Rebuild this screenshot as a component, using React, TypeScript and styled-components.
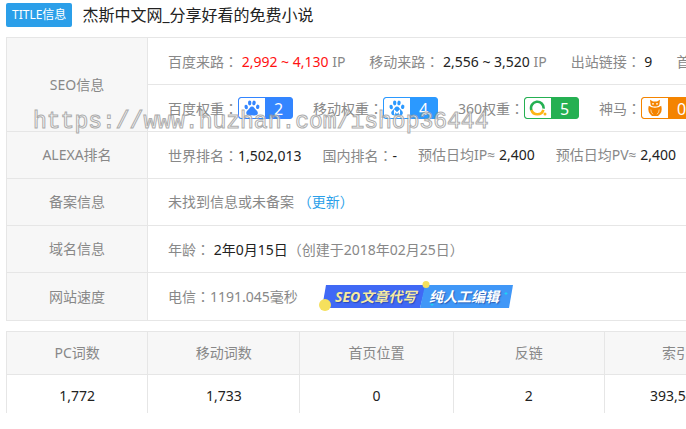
import React from "react";
import styled, { createGlobalStyle } from "styled-components";

const Global = createGlobalStyle`
  * { box-sizing: border-box; }
  body {
    margin: 0;
    background: #fff;
    color: #888;
    font: 14px/20px "Noto Sans", "Open Sans", "Noto Sans CJK SC", sans-serif;
    overflow: hidden;
  }
`;

const Page = styled.main`
  position: relative;
  padding: 3px 0 0 6px;
  overflow: hidden;
`;

const TitleBar = styled.header`
  display: flex;
  align-items: center;
  gap: 10px;
  height: 24px;
  margin-bottom: 10px;
  white-space: nowrap;
`;

const Tag = styled.span`
  padding: 0 6px;
  border-radius: 2px;
  background: #2b9fe9;
  color: #fff;
  font-size: 12px;
  line-height: 24px;
`;

const Title = styled.h1`
  margin: 0;
  color: #222;
  font-size: 16px;
  font-weight: 400;
  line-height: 24px;
`;

const Table = styled.table`
  min-width: 100%;
  border-collapse: collapse;
  white-space: nowrap;
`;

const InfoTable = styled(Table)`
  margin-bottom: 10px;
`;

const InfoHead = styled.th`
  width: 141px;
  min-width: 141px;
  padding: 0;
  border: 1px solid #e6e6e6;
  background: #f7f7f7;
  font-weight: 400;
  text-align: center;
`;

const InfoCell = styled.td<{ $tall?: boolean }>`
  height: ${(p) => (p.$tall ? 48 : 47)}px;
  padding: 0 20px;
  border: 1px solid #e6e6e6;
`;

const Items = styled.div<{ $gap?: number }>`
  display: flex;
  align-items: center;
  gap: ${(p) => p.$gap ?? 20}px;
`;

const Item = styled.span`
  white-space: pre;
`;

const WeightItem = styled.span`
  display: flex;
  align-items: center;
`;

const Colon = styled.span`
  font-family: "Noto Sans CJK TC", sans-serif;
`;

const Value = styled.span<{ $hot?: boolean }>`
  color: ${(p) => (p.$hot ? "#f11" : "#222")};
`;

const Link = styled.a`
  color: #2b9fe9;
  text-decoration: none;
`;

const Badge = styled.a<{ $color: string }>`
  display: flex;
  width: 55px;
  height: 22px;
  border: 1px solid ${(p) => p.$color};
  border-radius: 3px;
  background: ${(p) => p.$color};
  color: #fff;
  font-size: 16px;
  line-height: 22px;
  text-decoration: none;
  overflow: hidden;
`;

const BadgeIcon = styled.span`
  display: flex;
  align-items: center;
  justify-content: center;
  width: 26px;
  border-radius: 2px 0 0 2px;
  background: #fff;
`;

const BadgeNumber = styled.span`
  flex: 1;
  text-align: center;
`;

const Banner = styled.a`
  display: block;
  height: 32px;
`;

const BannerText = styled.text`
  font: italic 700 14px "Noto Sans", "Noto Sans CJK SC", sans-serif;
  text-shadow: 1px 1px 1px rgba(20, 40, 120, 0.5);
`;

const StatsTable = styled(Table)`
  table-layout: fixed;
  width: 742px;
`;

const StatsCol = styled.col<{ $width: number }>`
  width: ${(p) => p.$width}px;
`;

const StatsHead = styled.th`
  height: 43px;
  padding: 0;
  border: 1px solid #e6e6e6;
  background: #f7f7f7;
  font-weight: 400;
`;

const StatsCell = styled.td`
  height: 38px;
  padding: 4px 0 0;
  border: 1px solid #e6e6e6;
  border-bottom: 0;
  color: #222;
  text-align: center;
`;

const Watermark = styled.div`
  position: absolute;
  top: 106px;
  left: 33px;
  color: #fff;
  font-family: "Liberation Mono", monospace;
  font-size: 23px;
  line-height: 32px;
  opacity: 0.8;
  -webkit-text-stroke: 1px #999;
  pointer-events: none;
`;

function Label({ children }: { children: string }) {
  return (
    <span>
      {children}
      <Colon>：</Colon>
    </span>
  );
}

function Paw({ color, mobile }: { color: string; mobile?: boolean }) {
  return (
    <svg width="16" height="16" viewBox="0 0 16 16" fill={color} aria-hidden="true">
      <ellipse cx="2.2" cy="7" rx="1.7" ry="2.2" transform="rotate(-12 2.2 7)" />
      <ellipse cx="5.7" cy="3" rx="1.7" ry="2.4" />
      <ellipse cx="10" cy="3" rx="1.7" ry="2.4" transform="rotate(10 10 3)" />
      <ellipse cx="13.7" cy="6.8" rx="1.7" ry="2.2" transform="rotate(12 13.7 6.8)" />
      <path d="M8 6.6C6 6.6 5.6 8.6 4.2 9.8C2.8 11 1.9 12 2.4 13.8C3 15.8 5 15.6 8 15.3C11 15.6 13.2 15.8 13.7 13.8C14.2 12 13.2 11 11.9 9.8C10.5 8.6 10 6.6 8 6.6Z" />
      {mobile && (
        <path d="M5.6 14.4V10.7L8 13L10.4 10.7V14.4" fill="none" stroke="#fff" strokeWidth="1.3" />
      )}
    </svg>
  );
}

function Ring() {
  return (
    <svg width="18" height="18" viewBox="0 0 18 18" fill="none" aria-hidden="true">
      <path d="M2.4 11.2A6.3 6.3 0 1 1 14.6 9.6" stroke="#25b052" strokeWidth="2.6" />
      <path d="M2.4 11A6.3 6.3 0 0 0 14.4 10.8" stroke="#fdb515" strokeWidth="2.6" />
      <circle cx="16" cy="15" r="1.5" fill="#fdb515" />
    </svg>
  );
}

function Owl() {
  return (
    <svg width="14" height="18" viewBox="0 0 14 18" fill="#f48400" aria-hidden="true">
      <path d="M2 0.8L5 2.6H9L12 0.8L11.4 5.5Q11 7.6 7 7.6Q3 7.6 2.6 5.5Z" />
      <path d="M0.8 6.8Q3.5 8.8 7 8.8Q10.5 8.8 13.2 6.8Q14.6 12 12 15L10 17H4L2 15Q-0.6 12 0.8 6.8Z" />
      <circle cx="5" cy="4.8" r="0.9" fill="#fff" />
      <circle cx="9" cy="4.8" r="0.9" fill="#fff" />
      <path d="M2.8 10.5Q2.8 13.5 5 15.3M11.2 10.5Q11.2 13.5 9 15.3" fill="none" stroke="#fff" strokeWidth="0.6" />
    </svg>
  );
}

function Weight({ label, color, value, icon }: { label: string; color: string; value: string; icon: React.ReactNode }) {
  return (
    <WeightItem>
      <Label>{label}</Label>
      <Badge href="#" $color={color}>
        <BadgeIcon>{icon}</BadgeIcon>
        <BadgeNumber>{value}</BadgeNumber>
      </Badge>
    </WeightItem>
  );
}

function WritingBanner() {
  return (
    <Banner href="#" aria-label="SEO文章代写 纯人工编辑">
      <svg width="196" height="32" viewBox="0 0 196 32">
        <path d="M8 4H108L102 27H4Z" fill="#4069f5" />
        <path d="M107 4H195L191 27H102Z" fill="#4097f7" />
        <circle cx="7" cy="24" r="6" fill="#f5e05c" />
        <circle cx="108" cy="3.5" r="3.5" fill="#f5e05c" />
        <path d="M188 11V14M186.5 12.5H189.5M114 22V25M112.5 23.5H115.5" stroke="#1dd3f5" />
        <BannerText x="17" y="21" fill="#f7eba0">SEO文章代写</BannerText>
        <BannerText x="111" y="21" fill="#fff">纯人工编辑</BannerText>
      </svg>
    </Banner>
  );
}

const stats = [
  { name: "PC词数", value: "1,772", width: 141 },
  { name: "移动词数", value: "1,733", width: 152 },
  { name: "首页位置", value: "0", width: 153 },
  { name: "反链", value: "2", width: 151 },
  { name: "索引", value: "393,540", width: 143 },
];

export default function App() {
  return (
    <Page>
      <Global />
      <TitleBar>
        <Tag>TITLE信息</Tag>
        <Title>杰斯中文网_分享好看的免费小说</Title>
      </TitleBar>

      <InfoTable>
        <tbody>
          <tr>
            <InfoHead scope="row" rowSpan={2}>SEO信息</InfoHead>
            <InfoCell>
              <Items $gap={24}>
                <Item><Label>百度来路</Label> <Value $hot>2,992 ~ 4,130</Value> IP</Item>
                <Item><Label>移动来路</Label> <Value>2,556 ~ 3,520</Value> IP</Item>
                <Item><Label>出站链接</Label> <Value>9</Value></Item>
                <Item><Label>首页内链</Label></Item>
              </Items>
            </InfoCell>
          </tr>
          <tr>
            <InfoCell>
              <Items>
                <Weight label="百度权重" color="#3385ff" value="2" icon={<Paw color="#3385ff" />} />
                <Weight label="移动权重" color="#2b99ff" value="4" icon={<Paw color="#2b99ff" mobile />} />
                <Weight label="360权重" color="#25b052" value="5" icon={<Ring />} />
                <Weight label="神马" color="#f48400" value="0" icon={<Owl />} />
              </Items>
            </InfoCell>
          </tr>
          <tr>
            <InfoHead scope="row">ALEXA排名</InfoHead>
            <InfoCell>
              <Items $gap={21}>
                <Item><Label>世界排名</Label><Value>1,502,013</Value></Item>
                <Item><Label>国内排名</Label><Value>-</Value></Item>
                <Item>预估日均IP≈ <Value>2,400</Value></Item>
                <Item>预估日均PV≈ <Value>2,400</Value></Item>
              </Items>
            </InfoCell>
          </tr>
          <tr>
            <InfoHead scope="row">备案信息</InfoHead>
            <InfoCell>未找到信息或未备案 <Link href="#">（更新）</Link></InfoCell>
          </tr>
          <tr>
            <InfoHead scope="row">域名信息</InfoHead>
            <InfoCell><Label>年龄</Label> <Value>2年0月15日</Value>（创建于2018年02月25日）</InfoCell>
          </tr>
          <tr>
            <InfoHead scope="row">网站速度</InfoHead>
            <InfoCell $tall>
              <Items>
                <Item><Label>电信</Label>1191.045毫秒</Item>
                <WritingBanner />
              </Items>
            </InfoCell>
          </tr>
        </tbody>
      </InfoTable>

      <StatsTable>
        <colgroup>
          {stats.map((s) => <StatsCol key={s.name} $width={s.width} />)}
        </colgroup>
        <thead>
          <tr>{stats.map((s) => <StatsHead key={s.name} scope="col">{s.name}</StatsHead>)}</tr>
        </thead>
        <tbody>
          <tr>{stats.map((s) => <StatsCell key={s.name}>{s.value}</StatsCell>)}</tr>
        </tbody>
      </StatsTable>

      <Watermark>https://www.huzhan.com/ishop36444</Watermark>
    </Page>
  );
}
